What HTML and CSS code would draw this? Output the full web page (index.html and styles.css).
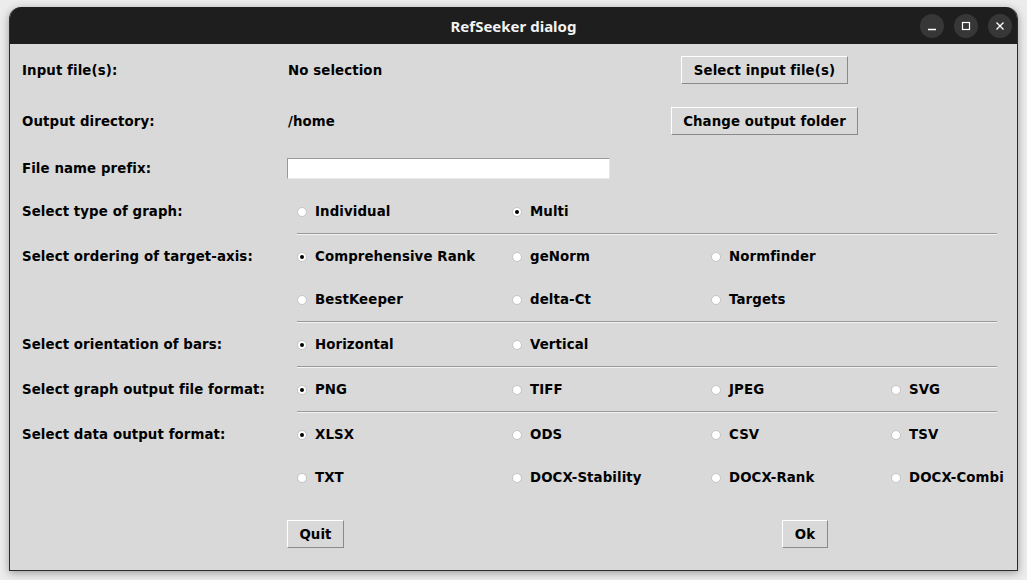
FILE: index.html
```html
<!DOCTYPE html>
<html lang="en">
<head>
<meta charset="utf-8">
<title>RefSeeker dialog</title>
<link rel="stylesheet" href="styles.css">
</head>
<body>
<div class="window">
  <div class="titlebar">
    <div></div>
    <div class="title">RefSeeker dialog</div>
    <div class="controls">
      <span class="ctl"><svg width="10" height="10" viewBox="0 0 10 10"><line x1="1" y1="8.5" x2="9" y2="8.5" stroke="#fff" stroke-width="1.3"/></svg></span>
      <span class="ctl"><svg width="10" height="10" viewBox="0 0 10 10"><rect x="1.5" y="1.5" width="7" height="7" fill="none" stroke="#fff" stroke-width="1.2"/></svg></span>
      <span class="ctl"><svg width="10" height="10" viewBox="0 0 10 10"><path d="M1.5 1.5 L8.5 8.5 M8.5 1.5 L1.5 8.5" stroke="#fff" stroke-width="1.3"/></svg></span>
    </div>
  </div>
  <div class="content">
    <div class="lbl r1">Input file(s):</div>
    <div class="val c2 r1">No selection</div>
    <div class="btn-cell r1 c35"><button class="btn btn-select">Select input file(s)</button></div>

    <div class="lbl r2">Output directory:</div>
    <div class="val c2 r2">/home</div>
    <div class="btn-cell r2 c35"><button class="btn btn-change">Change output folder</button></div>

    <div class="lbl r3">File name prefix:</div>
    <div class="c25 r3 entry-cell"><span class="entry"></span></div>

    <div class="lbl r4">Select type of graph:</div>
    <div class="opt c2 r4"><span class="radio"></span>Individual</div>
    <div class="opt c3 r4"><span class="radio on"></span>Multi</div>

    <div class="sep s1"></div>

    <div class="lbl r5">Select ordering of target-axis:</div>
    <div class="opt c2 r5"><span class="radio on"></span>Comprehensive Rank</div>
    <div class="opt c3 r5"><span class="radio"></span>geNorm</div>
    <div class="opt c4 r5"><span class="radio"></span>Normfinder</div>
    <div class="opt c2 r6"><span class="radio"></span>BestKeeper</div>
    <div class="opt c3 r6"><span class="radio"></span>delta-Ct</div>
    <div class="opt c4 r6"><span class="radio"></span>Targets</div>

    <div class="sep s2"></div>

    <div class="lbl r7">Select orientation of bars:</div>
    <div class="opt c2 r7"><span class="radio on"></span>Horizontal</div>
    <div class="opt c3 r7"><span class="radio"></span>Vertical</div>

    <div class="sep s3"></div>

    <div class="lbl r8">Select graph output file format:</div>
    <div class="opt c2 r8"><span class="radio on"></span>PNG</div>
    <div class="opt c3 r8"><span class="radio"></span>TIFF</div>
    <div class="opt c4 r8"><span class="radio"></span>JPEG</div>
    <div class="opt c5 r8"><span class="radio"></span>SVG</div>

    <div class="sep s4"></div>

    <div class="lbl r9">Select data output format:</div>
    <div class="opt c2 r9"><span class="radio on"></span>XLSX</div>
    <div class="opt c3 r9"><span class="radio"></span>ODS</div>
    <div class="opt c4 r9"><span class="radio"></span>CSV</div>
    <div class="opt c5 r9"><span class="radio"></span>TSV</div>
    <div class="opt c2 r10"><span class="radio"></span>TXT</div>
    <div class="opt c3 r10"><span class="radio"></span>DOCX-Stability</div>
    <div class="opt c4 r10"><span class="radio"></span>DOCX-Rank</div>
    <div class="opt c5 r10"><span class="radio"></span>DOCX-Combi</div>

    <div class="c2 r11 bottom-cell"><button class="btn btn-quit">Quit</button></div>
    <div class="c4 r11 bottom-cell"><button class="btn btn-ok">Ok</button></div>
  </div>
</div>
</body>
</html>
```

FILE: styles.css
```css
html, body {
  margin: 0;
  padding: 0;
}
body {
  background: #ececec;
  padding: 7px 0 0 9px;
  width: 1027px;
  height: 580px;
  box-sizing: border-box;
  overflow: hidden;
  font-family: "DejaVu Sans", sans-serif;
}
.window {
  width: 1009px;
  height: 564px;
  box-sizing: border-box;
  border: 1px solid #2c2c2c;
  border-top: none;
  border-radius: 12px 12px 0 0;
  overflow: hidden;
  background: #d9d9d9;
  box-shadow: 0 2px 8px rgba(0,0,0,0.35);
  display: flex;
  flex-direction: column;
}
.titlebar {
  height: 37px;
  flex: none;
  background: #1e1e1e;
  display: grid;
  grid-template-columns: 1fr auto 1fr;
  align-items: center;
}
.title {
  color: #f2f2f2;
  font-family: "Noto Sans", "DejaVu Sans", sans-serif;
  font-weight: bold;
  font-size: 15px;
  letter-spacing: 0;
}
.controls {
  display: flex;
  justify-content: flex-end;
  gap: 10px;
  padding-right: 5px;
}
.ctl {
  width: 24px;
  height: 24px;
  border-radius: 50%;
  background: #373737;
  display: flex;
  align-items: center;
  justify-content: center;
}
.ctl svg { display: block; }

.content {
  flex: 1;
  display: grid;
  padding-left: 12px;
  grid-template-columns: 265px 215px 199px 180px 1fr;
  grid-template-rows: 52px 50px 44px 43px 2px 43px 43px 2px 43px 2px 43px 2px 43px 43px 1fr;
  align-items: center;
  font-size: 13.33px;
  font-weight: bold;
  letter-spacing: 0.1px;
  color: #000;
}
.lbl { grid-column: 1; }
.c2 { grid-column: 2; }
.c3 { grid-column: 3; }
.c4 { grid-column: 4; }
.c5 { grid-column: 5; }
.c35 { grid-column: 3 / 6; }
.c25 { grid-column: 2 / 6; }
.r1 { grid-row: 1; }
.r2 { grid-row: 2; }
.r3 { grid-row: 3; }
.r4 { grid-row: 4; }
.s1 { grid-row: 5; }
.r5 { grid-row: 6; }
.r6 { grid-row: 7; }
.s2 { grid-row: 8; }
.r7 { grid-row: 9; }
.s3 { grid-row: 10; }
.r8 { grid-row: 11; }
.s4 { grid-row: 12; }
.r9 { grid-row: 13; }
.r10 { grid-row: 14; }
.r11 { grid-row: 15; align-self: start; }

.val { padding-left: 1px; }

.sep {
  grid-column: 2 / 6;
  margin-left: 10px;
  margin-right: 20px;
  height: 2px;
  box-sizing: border-box;
  border-top: 1px solid #9a9a9a;
  border-bottom: 1px solid #f2f2f2;
}

.opt {
  display: flex;
  align-items: center;
  padding-left: 10px;
  white-space: nowrap;
}
.radio {
  width: 10px;
  height: 10px;
  box-sizing: border-box;
  border-radius: 50%;
  background: #fff;
  border: 1px solid #c4c4c4;
  margin-right: 8px;
  display: flex;
  align-items: center;
  justify-content: center;
  flex: none;
}
.radio.on::after {
  content: "";
  width: 4px;
  height: 4px;
  border-radius: 50%;
  background: #000;
}

.btn {
  font-family: "DejaVu Sans", sans-serif;
  font-weight: bold;
  font-size: 13.33px;
  letter-spacing: 0.1px;
  color: #000;
  background: #d9d9d9;
  height: 28px;
  box-sizing: border-box;
  border: 1px solid;
  border-color: #ffffff #8a8a8a #8a8a8a #ffffff;
  padding: 0;
  margin: 0;
  display: block;
}
.btn-cell { justify-self: start; }
.btn-select { margin-left: 179px; width: 167px; }
.btn-change { margin-left: 169px; width: 187px; }

.entry-cell { display: flex; }
.entry {
  display: block;
  width: 323px;
  height: 21px;
  box-sizing: border-box;
  background: #fff;
  border: 1px solid;
  border-color: #9a9a9a #e8e8e8 #e8e8e8 #9a9a9a;
}

.bottom-cell { padding-top: 21px; justify-self: start; }
.btn-quit { width: 57px; }
.btn-ok { margin-left: 81px; width: 46px; }
```
